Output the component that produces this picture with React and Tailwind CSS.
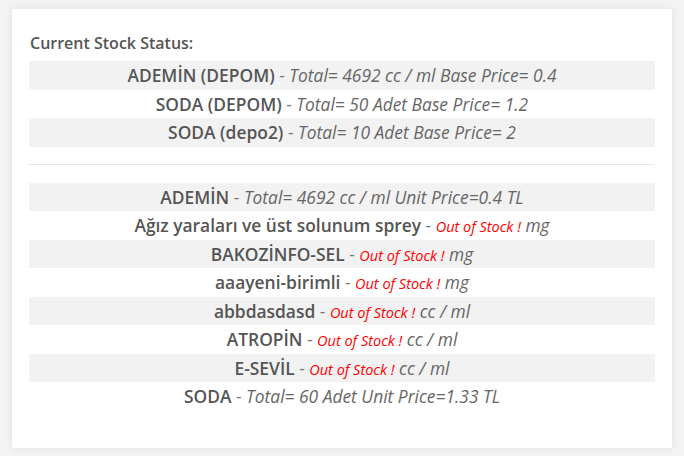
const baseStock = [
  { name: "ADEMİN (DEPOM)", info: "Total= 4692 cc / ml Base Price= 0.4" },
  { name: "SODA (DEPOM)", info: "Total= 50 Adet Base Price= 1.2" },
  { name: "SODA (depo2)", info: "Total= 10 Adet Base Price= 2" },
];

const products = [
  { name: "ADEMİN", info: "Total= 4692 cc / ml Unit Price=0.4 TL" },
  { name: "Ağız yaraları ve üst solunum sprey", out: true, unit: "mg" },
  { name: "BAKOZİNFO-SEL", out: true, unit: "mg" },
  { name: "aaayeni-birimli", out: true, unit: "mg" },
  { name: "abbdasdasd", out: true, unit: "cc / ml" },
  { name: "ATROPİN", out: true, unit: "cc / ml" },
  { name: "E-SEVİL", out: true, unit: "cc / ml" },
  { name: "SODA", info: "Total= 60 Adet Unit Price=1.33 TL" },
];

const Row = ({ item, index }) => (
  <div
    className={`h-[28.5px] leading-[28.5px] text-center whitespace-nowrap text-[17.4px] ${
      index % 2 === 0 ? "bg-[#f2f2f2]" : ""
    }`}
  >
    <span className="font-semibold text-[#555]">{item.name}</span>
    <span className="text-[#777]"> - </span>
    {item.out ? (
      <>
        <span className="italic text-[14.5px] text-[#ff0000]">Out of Stock !</span>
        <span className="italic text-[#666]"> {item.unit}</span>
      </>
    ) : (
      <span className="italic text-[#666]">{item.info}</span>
    )}
  </div>
);

export default function App() {
  return (
    <div
      className="w-[684px] h-[456px] bg-[#f3f3f3] pt-[9px] pl-[12px]"
      style={{ fontFamily: '"Open Sans", "Noto Sans", sans-serif' }}
    >
      <div className="w-[660px] h-[439px] bg-white shadow-[0_0_8px_rgba(0,0,0,0.08)] px-[17px] pt-[22px] text-[16px]">
        <h3 className="text-[16px] font-semibold text-[#555] leading-[24px] pl-[1px] mb-[6px]">
          Current Stock Status:
        </h3>
        <div>
          {baseStock.map((item, i) => (
            <Row key={item.name} item={item} index={i} />
          ))}
        </div>
        <hr className="border-0 border-t border-[#e6e6e6] mt-[17px] mb-[18px]" />
        <div>
          {products.map((item, i) => (
            <Row key={item.name} item={item} index={i} />
          ))}
        </div>
      </div>
    </div>
  );
}
